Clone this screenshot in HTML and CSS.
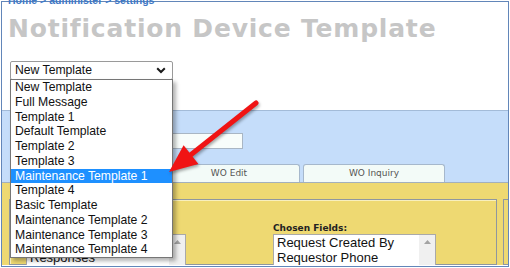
FILE: index.html
```html
<!DOCTYPE html>
<html lang="en">
<head>
    <meta charset="UTF-8">
    <meta name="viewport" content="width=device-width, initial-scale=1.0">
    <title>Notification Device Template</title>
    <link rel="stylesheet" href="styles.css">
</head>
<body>
    <div class="frame">
        <div class="crumbs">Home &gt; administer &gt; settings</div>
        <h1 class="title">Notification Device Template</h1>

        <!-- Template picker, shown open -->
        <div class="picker">
            <div class="select">
                <span>New Template</span>
                <svg class="chevron" width="10" height="7" viewBox="0 0 10 7"><path d="M1.2 1.2 L5 5 L8.8 1.2" /></svg>
            </div>
            <ul class="options">
                <li>New Template</li>
                <li>Full Message</li>
                <li>Template 1</li>
                <li>Default Template</li>
                <li>Template 2</li>
                <li>Template 3</li>
                <li class="active">Maintenance Template 1</li>
                <li>Template 4</li>
                <li>Basic Template</li>
                <li>Maintenance Template 2</li>
                <li>Maintenance Template 3</li>
                <li>Maintenance Template 4</li>
            </ul>
        </div>

        <div class="blue-panel">
            <div class="name-row"><span class="text-input"></span></div>
            <div class="tabs">
                <div class="tab">WO Edit</div>
                <div class="tab">WO Inquiry</div>
            </div>
        </div>

        <div class="yellow-panel">
            <div class="fields-box">
                <div class="field-col">
                    <div class="field-label">&nbsp;</div>
                    <div class="listbox">
                        <div class="items">
                            <div>&nbsp;</div>
                            <div>Responses</div>
                        </div>
                        <div class="scroll"><svg width="7" height="4" viewBox="0 0 7 4"><path d="M0 4 L3.5 0 L7 4 Z" /></svg></div>
                    </div>
                </div>
                <div class="field-col">
                    <div class="field-label">Chosen Fields:</div>
                    <div class="listbox">
                        <div class="items">
                            <div>Request Created By</div>
                            <div>Requestor Phone</div>
                        </div>
                        <div class="scroll"><svg width="7" height="4" viewBox="0 0 7 4"><path d="M0 4 L3.5 0 L7 4 Z" /></svg></div>
                    </div>
                </div>
            </div>
            <div class="side-box"></div>
        </div>
    </div>

    <!-- Callout arrow drawn over the screenshot -->
    <svg class="arrow" width="510" height="268" viewBox="0 0 510 268">
        <line x1="256" y1="103" x2="188" y2="157" />
        <polygon points="169,172 183.6,145.2 198.4,164" />
    </svg>
</body>
</html>
```

FILE: styles.css
```css
body {
    margin: 0;
    width: 510px;
    height: 268px;
    overflow: hidden;
    position: relative;
    background: #fff;
    font-family: "Liberation Sans", Arial, sans-serif;
}

.frame {
    box-sizing: border-box;
    width: 508px;
    height: 266px;
    margin: 1px 0 0 1px;
    border: 1px solid #6286b9;
}

.crumbs {
    margin: -8px 0 0 6px;
    font-size: 10.5px;
    line-height: 12px;
    font-weight: bold;
    color: #3f79c6;
}

.title {
    margin: 8px 0 0 6px;
    font-family: "DejaVu Sans", sans-serif;
    font-size: 25px;
    line-height: 30px;
    font-weight: bold;
    letter-spacing: 0.8px;
    color: #c6c6c6;
    white-space: nowrap;
}

/* select + open list */
.picker {
    position: relative;
    width: 163px;
    height: 19px;
    margin: 17px 0 0 8px;
    font-size: 12.2px;
    z-index: 2;
}

.select {
    box-sizing: border-box;
    height: 19px;
    border: 1px solid #9a9a9a;
    border-radius: 2px;
    padding: 0 4px;
    line-height: 17px;
    display: flex;
    justify-content: space-between;
    align-items: center;
    color: #111;
}

.chevron path {
    fill: none;
    stroke: #1a1a1a;
    stroke-width: 2;
}

.chevron {
    margin-right: 2px;
}

.options {
    position: absolute;
    top: 18px;
    left: 0;
    width: 163px;
    box-sizing: border-box;
    margin: 0;
    padding: 0;
    list-style: none;
    background: #fff;
    border: 1px solid #767676;
    box-shadow: 3px 3px 4px rgba(0, 0, 0, 0.3);
}

.options li {
    line-height: 14.75px;
    padding: 0 4px;
    color: #111;
    white-space: nowrap;
}

.options li.active {
    background: #1e90ff;
    color: #fff;
}

/* blue header panel */
.blue-panel {
    margin-top: 30px;
    border-top: 1px solid #a3bbd8;
    background: #c5ddfa;
}

.name-row {
    padding: 22px 0 0 110px;
}

.text-input {
    display: block;
    box-sizing: border-box;
    width: 131px;
    height: 16px;
    border: 1px solid #a9b6c4;
    background: #f8fdfb;
}

.tabs {
    display: flex;
    gap: 3px;
    margin-top: 15px;
    padding-left: 156px;
}

.tab {
    box-sizing: border-box;
    width: 142px;
    height: 18px;
    border: 1px solid #a6b8cc;
    border-bottom: none;
    border-radius: 3px 3px 0 0;
    background: #f3fbf8;
    text-align: center;
    font-family: "DejaVu Sans", sans-serif;
    font-size: 9px;
    line-height: 16px;
    color: #555;
}

/* yellow body panel */
.yellow-panel {
    box-sizing: border-box;
    height: 83px;
    overflow: hidden;
    border-top: 1px solid #a3b0bd;
    background: #eed972;
    display: flex;
    gap: 6px;
    padding: 16px 0 0 7px;
}

.fields-box {
    box-sizing: border-box;
    width: 488px;
    flex-shrink: 0;
    border: 1px solid #8f979f;
    box-shadow: inset 1px 1px 0 #f8efbd;
    padding: 23px 0 0 16px;
    display: grid;
    grid-template-columns: 160px 163px;
    column-gap: 87px;
    align-content: start;
}

.side-box {
    flex: 1;
    border: 1px solid #8f979f;
    border-right: none;
}

.field-label {
    font-family: "DejaVu Sans", sans-serif;
    font-size: 9px;
    line-height: 11px;
    font-weight: bold;
    color: #222;
}

.listbox {
    display: flex;
    height: 60px;
    border: 1px solid #a9a9a9;
    background: #fff;
}

.items {
    flex: 1;
    padding: 0 3px;
    font-size: 13px;
    line-height: 15px;
    color: #111;
    white-space: nowrap;
    overflow: hidden;
}

.scroll {
    width: 16px;
    background: #f0f0f0;
    display: flex;
    justify-content: center;
    padding-top: 5px;
    box-sizing: border-box;
}

.scroll path {
    fill: #a3a3a3;
}

/* red callout arrow */
.arrow {
    position: absolute;
    top: 0;
    left: 0;
    z-index: 3;
    pointer-events: none;
    filter: drop-shadow(1px 2px 1.5px rgba(0, 0, 0, 0.35));
}

.arrow line {
    stroke: #f01414;
    stroke-width: 5;
    stroke-linecap: round;
}

.arrow polygon {
    fill: #f01414;
}
```
